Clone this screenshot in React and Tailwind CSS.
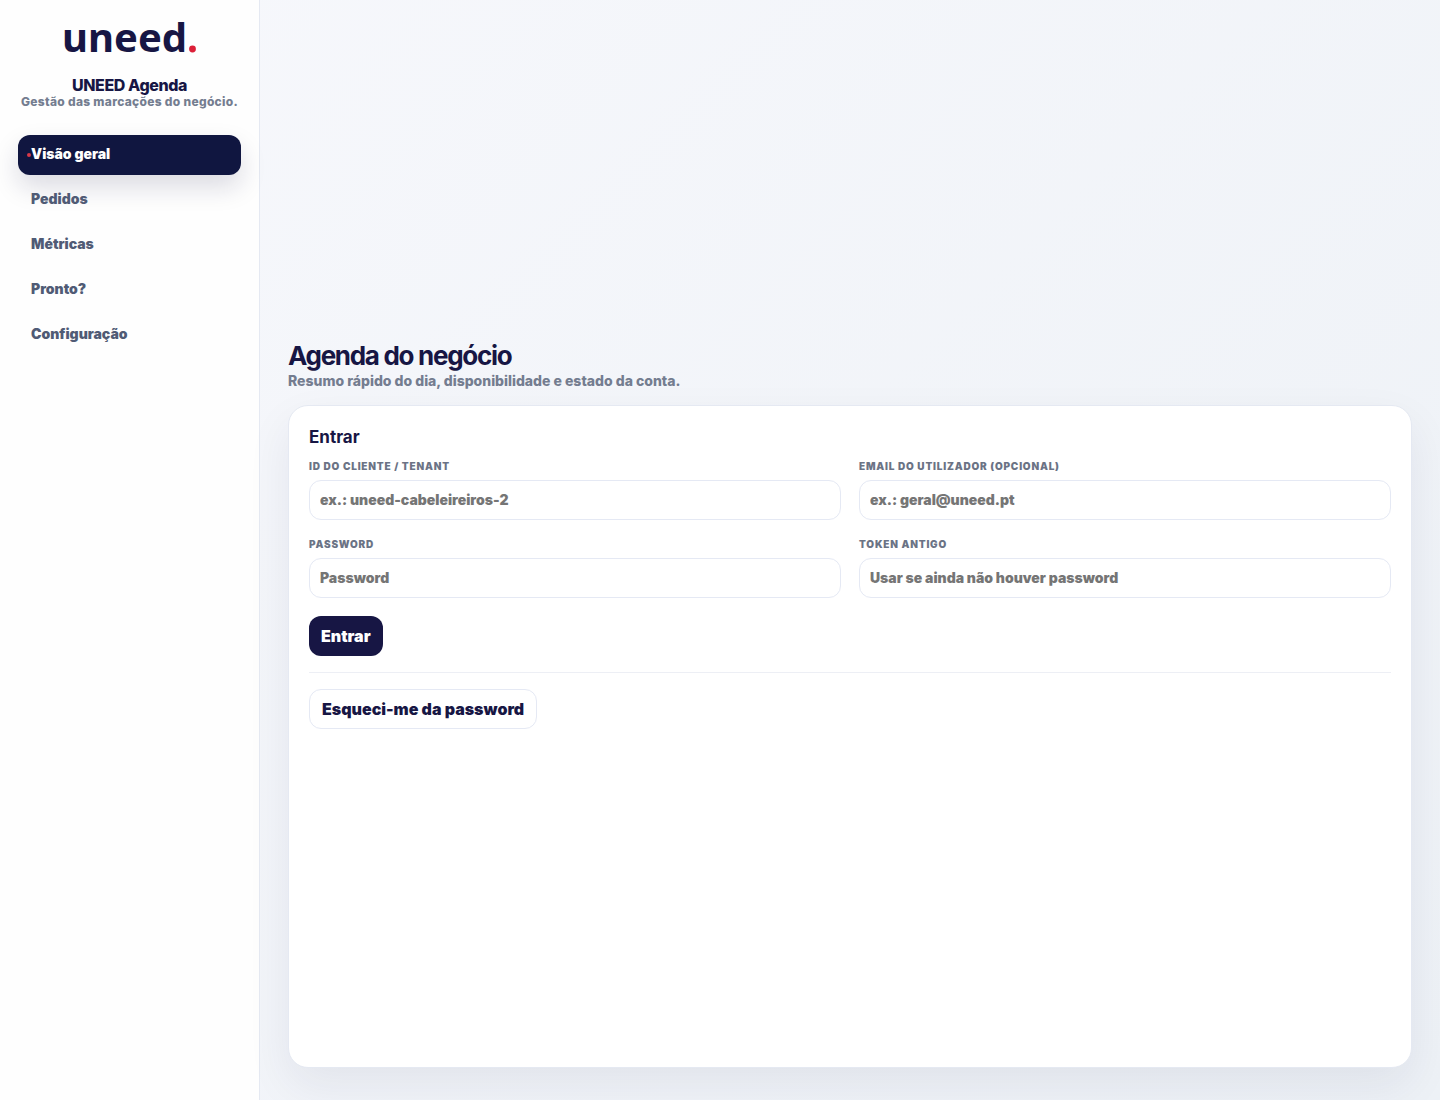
import { useState } from "react";

const NAV_ITEMS = ["Visão geral", "Pedidos", "Métricas", "Pronto?", "Configuração"];

const FIELDS = [
  { id: "tenant", label: "ID do cliente / tenant", type: "text", placeholder: "ex.: uneed-cabeleireiros-2" },
  { id: "email", label: "Email do utilizador (opcional)", type: "email", placeholder: "ex.: geral@uneed.pt" },
  { id: "password", label: "Password", type: "password", placeholder: "Password" },
  { id: "token", label: "Token antigo", type: "password", placeholder: "Usar se ainda não houver password" },
];

function Logo() {
  return (
    <svg className="w-[134px] h-14" viewBox="0 0 134 56" role="img" aria-label="uneed.">
      <text x="-1" y="44" fontSize="40" fontWeight="700" fill="#171644" className="font-['Noto_Sans',sans-serif]">
        uneed
      </text>
      <circle cx="129.5" cy="41" r="3.4" fill="#dc2038" />
    </svg>
  );
}

function Sidebar({ active, onSelect }) {
  return (
    <aside className="w-[260px] shrink-0 bg-[#fefefe] border-r border-[#e5e9f2] px-[18px] pt-2">
      <div className="flex flex-col items-center text-center">
        <Logo />
        <p className="mt-3 text-base leading-[18px] font-extrabold tracking-tight text-[#171644]">UNEED Agenda</p>
        <p className="text-xs leading-4 font-extrabold tracking-wide text-[#747d90] whitespace-nowrap">Gestão das marcações do negócio.</p>
      </div>

      <nav className="mt-[25px] flex flex-col gap-[5px]">
        {NAV_ITEMS.map((item) => (
          <button
            key={item}
            type="button"
            onClick={() => onSelect(item)}
            className={
              item === active
                ? "relative h-10 px-[13px] pb-0.5 rounded-xl text-left text-sm font-black bg-[#101640] text-white shadow-[0_12px_26px_rgba(23,22,68,0.15)]"
                : "relative h-10 px-[13px] pb-0.5 rounded-xl text-left text-sm font-black text-[#505b75]"
            }
          >
            {item === active && <span className="absolute left-[9px] top-[18px] w-1 h-1 rounded-full bg-[#d93848]" />}
            {item}
          </button>
        ))}
      </nav>
    </aside>
  );
}

function LoginCard() {
  const [values, setValues] = useState({ tenant: "", email: "", password: "", token: "" });

  const handleChange = (e) => {
    setValues({ ...values, [e.target.id]: e.target.value });
  };

  return (
    <section className="bg-white rounded-[20px] border border-[#e5e9f2] p-5 shadow-[0_18px_45px_rgba(23,22,68,0.07)]">
      <h2 className="text-[17px] leading-[22px] font-bold text-[#171644]">Entrar</h2>

      <form onSubmit={(e) => e.preventDefault()}>
        <div className="mt-3 grid grid-cols-2 gap-[18px]">
          {FIELDS.map((field) => (
            <div key={field.id} className="flex flex-col gap-2">
              <label htmlFor={field.id} className="text-[10px] leading-3 font-black uppercase tracking-[0.08em] text-[#6b7385]">
                {field.label}
              </label>
              <input
                id={field.id}
                type={field.type}
                placeholder={field.placeholder}
                value={values[field.id]}
                onChange={handleChange}
                className="w-full h-10 px-2.5 rounded-xl border border-[#e5e9f4] bg-white text-sm font-black text-[#171644] placeholder:text-[#757575] outline-none focus:border-[#171644]"
              />
            </div>
          ))}
        </div>

        <button type="submit" className="mt-[18px] h-10 px-3 rounded-xl bg-[#171644] text-white text-base font-black">
          Entrar
        </button>
      </form>

      <div className="mt-4 pt-4 border-t border-[#edeff5]">
        <button type="button" className="h-10 px-3 rounded-xl border border-[#e5e9f4] bg-white text-[#171644] text-base font-black">
          Esqueci-me da password
        </button>
      </div>
    </section>
  );
}

export default function App() {
  const [active, setActive] = useState("Visão geral");

  return (
    <div className="flex min-h-screen font-['Inter',sans-serif] bg-linear-135 from-[#f7f8fc] to-[#edf1f6]">
      <Sidebar active={active} onSelect={setActive} />
      <main className="flex-1 min-w-0 grid gap-4 px-7 pt-6 pb-8">
        <header className="flex flex-col justify-end">
          <h1 className="text-[26px] leading-[26px] font-bold tracking-tighter text-[#171644]">Agenda do negócio</h1>
          <p className="text-sm leading-4 mt-1 font-extrabold text-[#747d90]">Resumo rápido do dia, disponibilidade e estado da conta.</p>
        </header>
        <LoginCard />
      </main>
    </div>
  );
}
